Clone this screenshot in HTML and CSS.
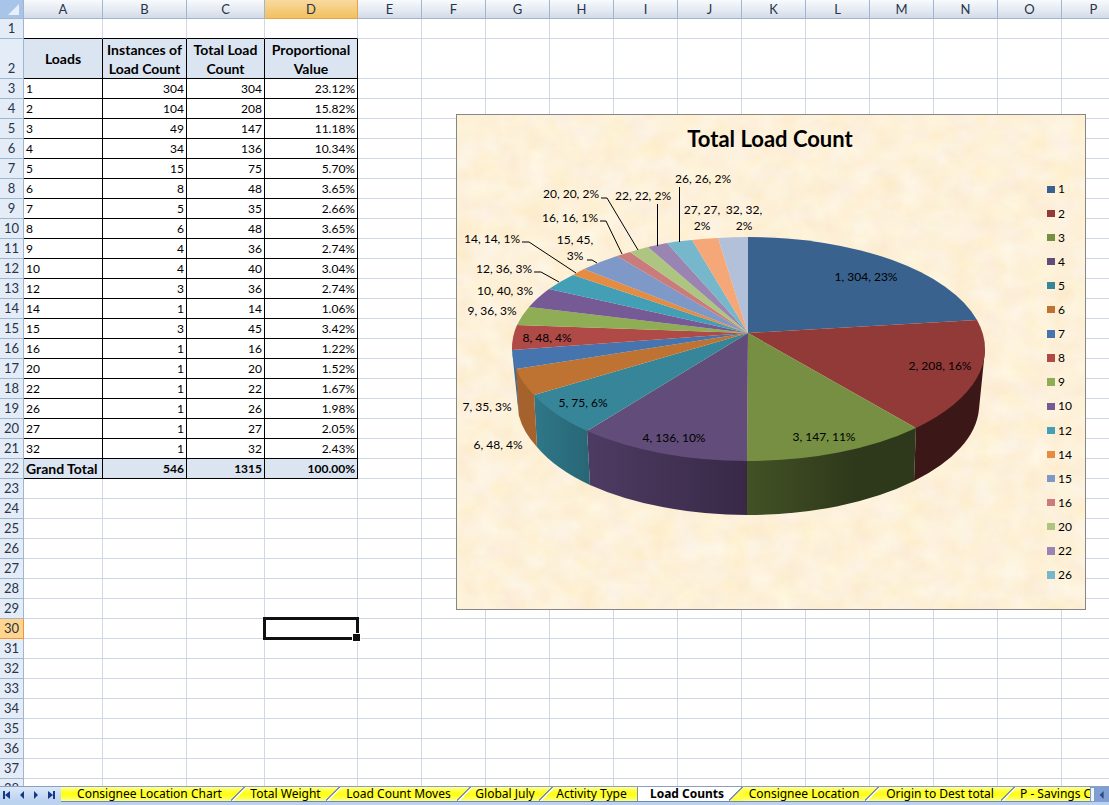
FILE: index.html
```html
<!DOCTYPE html>
<html lang="en">
<head>
<meta charset="utf-8">
<title>Load Counts</title>
<link rel="stylesheet" href="styles.css">
</head>
<body>
<main class="sheet">
<table class="grid">
<colgroup><col class="c-num"><col class="c-a"><col class="c-b"><col class="c-c"><col class="c-d"><col class="c-std"><col class="c-std"><col class="c-std"><col class="c-std"><col class="c-std"><col class="c-std"><col class="c-std"><col class="c-std"><col class="c-std"><col class="c-std"><col class="c-std"><col class="c-std"></colgroup>
<thead>
<tr><th class="corner"><svg viewBox="0 0 23 18" width="23" height="18" aria-hidden="true"><path d="M19 4V15H8Z" fill="#e6effa"/></svg></th><th>A</th><th>B</th><th>C</th><th class="selected">D</th><th>E</th><th>F</th><th>G</th><th>H</th><th>I</th><th>J</th><th>K</th><th>L</th><th>M</th><th>N</th><th>O</th><th>P</th></tr>
</thead>
<tbody>
<tr class="above"><th>1</th><td></td><td></td><td></td><td></td><td class="rest" colspan="12"></td></tr>
<tr class="data heading"><th>2</th><td>Loads</td><td>Instances of<br>Load Count</td><td>Total Load<br>Count</td><td>Proportional<br>Value</td><td class="rest" colspan="12"></td></tr>
<tr class="data"><th>3</th><td>1</td><td>304</td><td>304</td><td>23.12%</td><td class="rest" colspan="12"></td></tr>
<tr class="data"><th>4</th><td>2</td><td>104</td><td>208</td><td>15.82%</td><td class="rest" colspan="12"></td></tr>
<tr class="data"><th>5</th><td>3</td><td>49</td><td>147</td><td>11.18%</td><td class="rest" colspan="12"></td></tr>
<tr class="data"><th>6</th><td>4</td><td>34</td><td>136</td><td>10.34%</td><td class="rest" colspan="12"></td></tr>
<tr class="data"><th>7</th><td>5</td><td>15</td><td>75</td><td>5.70%</td><td class="rest" colspan="12"></td></tr>
<tr class="data"><th>8</th><td>6</td><td>8</td><td>48</td><td>3.65%</td><td class="rest" colspan="12"></td></tr>
<tr class="data"><th>9</th><td>7</td><td>5</td><td>35</td><td>2.66%</td><td class="rest" colspan="12"></td></tr>
<tr class="data"><th>10</th><td>8</td><td>6</td><td>48</td><td>3.65%</td><td class="rest" colspan="12"></td></tr>
<tr class="data"><th>11</th><td>9</td><td>4</td><td>36</td><td>2.74%</td><td class="rest" colspan="12"></td></tr>
<tr class="data"><th>12</th><td>10</td><td>4</td><td>40</td><td>3.04%</td><td class="rest" colspan="12"></td></tr>
<tr class="data"><th>13</th><td>12</td><td>3</td><td>36</td><td>2.74%</td><td class="rest" colspan="12"></td></tr>
<tr class="data"><th>14</th><td>14</td><td>1</td><td>14</td><td>1.06%</td><td class="rest" colspan="12"></td></tr>
<tr class="data"><th>15</th><td>15</td><td>3</td><td>45</td><td>3.42%</td><td class="rest" colspan="12"></td></tr>
<tr class="data"><th>16</th><td>16</td><td>1</td><td>16</td><td>1.22%</td><td class="rest" colspan="12"></td></tr>
<tr class="data"><th>17</th><td>20</td><td>1</td><td>20</td><td>1.52%</td><td class="rest" colspan="12"></td></tr>
<tr class="data"><th>18</th><td>22</td><td>1</td><td>22</td><td>1.67%</td><td class="rest" colspan="12"></td></tr>
<tr class="data"><th>19</th><td>26</td><td>1</td><td>26</td><td>1.98%</td><td class="rest" colspan="12"></td></tr>
<tr class="data"><th>20</th><td>27</td><td>1</td><td>27</td><td>2.05%</td><td class="rest" colspan="12"></td></tr>
<tr class="data"><th>21</th><td>32</td><td>1</td><td>32</td><td>2.43%</td><td class="rest" colspan="12"></td></tr>
<tr class="data total"><th>22</th><td>Grand Total</td><td>546</td><td>1315</td><td>100.00%</td><td class="rest" colspan="12"></td></tr>
<tr><th>23</th><td></td><td></td><td></td><td></td><td class="rest" colspan="12"></td></tr>
<tr><th>24</th><td></td><td></td><td></td><td></td><td class="rest" colspan="12"></td></tr>
<tr><th>25</th><td></td><td></td><td></td><td></td><td class="rest" colspan="12"></td></tr>
<tr><th>26</th><td></td><td></td><td></td><td></td><td class="rest" colspan="12"></td></tr>
<tr><th>27</th><td></td><td></td><td></td><td></td><td class="rest" colspan="12"></td></tr>
<tr><th>28</th><td></td><td></td><td></td><td></td><td class="rest" colspan="12"></td></tr>
<tr><th>29</th><td></td><td></td><td></td><td></td><td class="rest" colspan="12"></td></tr>
<tr><th class="selected">30</th><td></td><td></td><td></td><td class="cursor"></td><td class="rest" colspan="12"></td></tr>
<tr><th>31</th><td></td><td></td><td></td><td></td><td class="rest" colspan="12"></td></tr>
<tr><th>32</th><td></td><td></td><td></td><td></td><td class="rest" colspan="12"></td></tr>
<tr><th>33</th><td></td><td></td><td></td><td></td><td class="rest" colspan="12"></td></tr>
<tr><th>34</th><td></td><td></td><td></td><td></td><td class="rest" colspan="12"></td></tr>
<tr><th>35</th><td></td><td></td><td></td><td></td><td class="rest" colspan="12"></td></tr>
<tr><th>36</th><td></td><td></td><td></td><td></td><td class="rest" colspan="12"></td></tr>
<tr><th>37</th><td></td><td></td><td></td><td></td><td class="rest" colspan="12"></td></tr>
<tr><th>38</th><td></td><td></td><td></td><td></td><td class="rest" colspan="12"></td></tr>
</tbody>
</table>
<figure class="chart">
<svg class="plot" viewBox="456 114 630 496" role="img" aria-label="Total Load Count pie chart">
<defs>
<filter id="parchment" x="0" y="0" width="100%" height="100%" color-interpolation-filters="sRGB">
<feTurbulence type="fractalNoise" baseFrequency="0.04 0.05" numOctaves="4" seed="7"/>
<feColorMatrix values="0.02 0 0 0 0.982  0.03 0.05 0 0 0.904  0 0.12 0.08 0 0.752  0 0 0 0 1"/>
</filter>
<linearGradient id="side3"><stop offset="0" stop-color="#435225"/><stop offset=".65" stop-color="#2e381b"/><stop offset="1" stop-color="#2e381b"/></linearGradient>
<linearGradient id="side4"><stop offset="0" stop-color="#4e3b63"/><stop offset=".4" stop-color="#453457"/><stop offset="1" stop-color="#392947"/></linearGradient>
<linearGradient id="side5"><stop offset="0" stop-color="#2f7789"/><stop offset="1" stop-color="#286675"/></linearGradient>
</defs>
<rect x="456" y="114" width="630" height="496" filter="url(#parchment)"/>
<rect x="456.500" y="114.500" width="629" height="495" fill="none" stroke="#868686"/>
<g class="sides">
<path d="M985 350L979 409A231 110 0 0 1 914 481L916 427Z" fill="#3c1717"/>
<path d="M916 427L914 481A231 110 0 0 1 747 515V460Z" fill="url(#side3)"/>
<path d="M747 460V515A231 110 0 0 1 590 485L587 430Z" fill="url(#side4)"/>
<path d="M587 430L590 485A231 110 0 0 1 537 447L534 394Z" fill="url(#side5)"/>
<path d="M534 394L537 447A231 110 0 0 1 519 416L515 366Z" fill="#a5622c"/>
<path d="M512 350L519 417L516 369Z" fill="#3d68a0"/>
</g>
<g class="slices">
<path d="M748 333V237A236.500 112 0 0 1 977 320Z" fill="#39628f"/>
<path d="M748 333L977 320A236.500 112 0 0 1 916 428Z" fill="#923a38"/>
<path d="M748 333L916 428A236.500 112 0 0 1 747 461Z" fill="#768f42"/>
<path d="M748 333L747 461A236.500 112 0 0 1 587 431Z" fill="#624c7a"/>
<path d="M748 333L587 431A236.500 112 0 0 1 534 395Z" fill="#378598"/>
<path d="M748 333L534 395A236.500 112 0 0 1 516 369Z" fill="#bf7333"/>
<path d="M748 333L516 369A236.500 112 0 0 1 512 350Z" fill="#4674ae"/>
<path d="M748 333L512 350A236.500 112 0 0 1 517 325Z" fill="#b04a47"/>
<path d="M748 333L517 325A236.500 112 0 0 1 529 307Z" fill="#8fad54"/>
<path d="M748 333L529 307A236.500 112 0 0 1 549 289Z" fill="#755a95"/>
<path d="M748 333L549 289A236.500 112 0 0 1 573 275Z" fill="#439fb5"/>
<path d="M748 333L573 275A236.500 112 0 0 1 584 269Z" fill="#e48c41"/>
<path d="M748 333L584 269A236.500 112 0 0 1 617 256Z" fill="#7e99c7"/>
<path d="M748 333L617 256A236.500 112 0 0 1 630 252Z" fill="#c97c7b"/>
<path d="M748 333L630 252A236.500 112 0 0 1 648 247Z" fill="#adc580"/>
<path d="M748 333L648 247A236.500 112 0 0 1 667 243Z" fill="#9a84b1"/>
<path d="M748 333L667 243A236.500 112 0 0 1 692 240Z" fill="#77b7cb"/>
<path d="M748 333L692 240A236.500 112 0 0 1 718 238Z" fill="#f6a778"/>
<path d="M748 333L718 238A236.500 112 0 0 1 748 237Z" fill="#b3c0da"/>
</g>
<g class="leaders">
<path d="M601 198H607L638 250"/><path d="M600 221H606L622 254"/><path d="M522 242H529L576 273"/><path d="M587 260H592L597 263"/><path d="M534 272H541L559 282"/><path d="M657.500 204V246"/><path d="M679.500 187V242"/>
</g>
<text class="chart-title" x="770" y="147">Total Load Count</text>
<g class="labels">
<text x="703" y="183">26, 26, 2%</text><text x="643" y="200">22, 22, 2%</text><text x="571" y="198">20, 20, 2%</text><text x="570" y="222">16, 16, 1%</text><text x="492" y="243">14, 14, 1%</text>
<text x="575" y="244">15, 45,</text><text x="575" y="260">3%</text><text x="504" y="273">12, 36, 3%</text><text x="505" y="295">10, 40, 3%</text><text x="492" y="315">9, 36, 3%</text>
<text x="702" y="214">27, 27,</text><text x="702" y="230">2%</text><text x="744" y="214">32, 32,</text><text x="744" y="230">2%</text>
<text x="547" y="342">8, 48, 4%</text><text x="487" y="411">7, 35, 3%</text><text x="498" y="449">6, 48, 4%</text><text x="583" y="407">5, 75, 6%</text><text x="674" y="442">4, 136, 10%</text><text x="824" y="441">3, 147, 11%</text><text x="940" y="370">2, 208, 16%</text><text x="866" y="281">1, 304, 23%</text>
</g>
<g class="legend">
<rect x="1047" y="186" width="8" height="7" fill="#39628f"/><text x="1058" y="193">1</text>
<rect x="1047" y="210" width="8" height="7" fill="#923a38"/><text x="1058" y="218">2</text>
<rect x="1047" y="234" width="8" height="7" fill="#768f42"/><text x="1058" y="242">3</text>
<rect x="1047" y="258" width="8" height="7" fill="#624c7a"/><text x="1058" y="266">4</text>
<rect x="1047" y="282" width="8" height="7" fill="#378598"/><text x="1058" y="290">5</text>
<rect x="1047" y="306" width="8" height="7" fill="#bf7333"/><text x="1058" y="314">6</text>
<rect x="1047" y="330" width="8" height="8" fill="#4674ae"/><text x="1058" y="338">7</text>
<rect x="1047" y="354" width="8" height="8" fill="#b04a47"/><text x="1058" y="362">8</text>
<rect x="1047" y="378" width="8" height="8" fill="#8fad54"/><text x="1058" y="386">9</text>
<rect x="1047" y="403" width="8" height="7" fill="#755a95"/><text x="1058" y="410">10</text>
<rect x="1047" y="427" width="8" height="7" fill="#439fb5"/><text x="1058" y="435">12</text>
<rect x="1047" y="451" width="8" height="7" fill="#e48c41"/><text x="1058" y="459">14</text>
<rect x="1047" y="475" width="8" height="7" fill="#7e99c7"/><text x="1058" y="483">15</text>
<rect x="1047" y="499" width="8" height="7" fill="#c97c7b"/><text x="1058" y="507">16</text>
<rect x="1047" y="523" width="8" height="7" fill="#adc580"/><text x="1058" y="531">20</text>
<rect x="1047" y="547" width="8" height="8" fill="#9a84b1"/><text x="1058" y="555">22</text>
<rect x="1047" y="571" width="8" height="8" fill="#77b7cb"/><text x="1058" y="579">26</text>
</g>
</svg>
</figure>
</main>
<footer class="tabbar">
<div class="nav">
<button aria-label="First sheet"><svg viewBox="0 0 10 8"><path d="M1 0H3V8H1ZM8 0V8L3 4Z"/></svg></button>
<button aria-label="Previous sheet"><svg viewBox="0 0 10 8"><path d="M7 0V8L3 4Z"/></svg></button>
<button aria-label="Next sheet"><svg viewBox="0 0 10 8"><path d="M3 0V8L7 4Z"/></svg></button>
<button aria-label="Last sheet"><svg viewBox="0 0 10 8"><path d="M2 0V8L7 4ZM7 0H9V8H7Z"/></svg></button>
</div>
<div class="tabs">
<button class="tab">Consignee Location Chart</button>
<button class="tab slant">Total Weight</button>
<button class="tab slant">Load Count Moves</button>
<button class="tab slant">Global July</button>
<button class="tab slant">Activity Type</button>
<button class="tab active">Load Counts</button>
<button class="tab slant after-active">Consignee Location</button>
<button class="tab slant">Origin to Dest total</button>
<button class="tab slant last">P - Savings C</button>
</div>
<div class="splitter"></div>
<button class="scroll" aria-label="Scroll left"><svg viewBox="0 0 10 10"><path d="M7 0V10L2 5Z"/></svg></button>
</footer>
</body>
</html>
```
FILE: styles.css
```css
* {
  box-sizing: border-box;
}

body {
  margin: 0;
  height: 100vh;
  display: flex;
  flex-direction: column;
  overflow: hidden;
  background: #fff;
  font-family: Lato, "Open Sans", sans-serif;
  font-size: 12px;
  color: #000;
}

.sheet {
  position: relative;
  flex: 1;
  min-height: 0;
  overflow: hidden;
}

/* Cell grid */
.grid {
  width: 1126px;
  table-layout: fixed;
  border-collapse: separate;
  border-spacing: 0;
  line-height: 19px;
}

.c-num { width: 24px; }
.c-a { width: 79px; }
.c-b { width: 84px; }
.c-c { width: 78px; }
.c-d { width: 93px; }
.c-std { width: 64px; }

.grid th,
.grid td {
  height: 20px;
  padding: 0;
  border-right: 1px solid #d0d7e5;
  border-bottom: 1px solid #d0d7e5;
}

.grid th {
  border-color: #9eb6ce;
  background: #e4ecf7;
  color: #27344a;
  font-size: 13px;
  font-weight: 400;
}

.grid thead th {
  height: 19px;
  line-height: 18px;
  background: linear-gradient(#f8fafc, #e5eaf2 55%, #d3dbe8);
}

.grid thead .corner {
  background: #a9c4e9;
}

.corner svg {
  display: block;
}

.grid thead .selected {
  background: linear-gradient(#f9d99f, #f1c15f);
  border-color: #e8a24a;
}

.grid tbody .selected {
  background: #ffd58d;
  border-color: #f29536;
}

.grid .rest {
  background: repeating-linear-gradient(90deg, transparent 0 63px, #d0d7e5 63px 64px);
}

.above td:not(.rest) {
  border-bottom-color: #000;
}

.data td:not(.rest) {
  padding: 0 2px;
  border-color: #000;
  text-align: right;
}

.grid .data td:nth-child(2) {
  text-align: left;
}

.grid .heading td {
  height: 40px;
}

.grid .heading th {
  vertical-align: bottom;
}

.grid .heading td:not(.rest) {
  padding: 0;
  background: #dbe5f1;
  font-size: 14px;
  font-weight: 700;
  line-height: 19px;
  text-align: center;
}

.total td:not(.rest) {
  background: #dbe5f1;
  font-weight: 700;
}

.total td:nth-child(2) {
  font-size: 14px;
}

.cursor {
  position: relative;
}

.cursor::before {
  content: "";
  position: absolute;
  inset: -2px;
  border: 3px solid #111;
}

.cursor::after {
  content: "";
  position: absolute;
  right: -4px;
  bottom: -4px;
  width: 7px;
  height: 7px;
  border: 1px solid #fff;
  background: #111;
}

/* Floating chart */
.chart {
  position: absolute;
  left: 456px;
  top: 114px;
  width: 630px;
  margin: 0;
}

.plot {
  display: block;
  width: 100%;
}

.chart-title {
  font-size: 22px;
  font-weight: 700;
  text-anchor: middle;
}

.labels {
  font-size: 12px;
  text-anchor: middle;
}

.legend {
  font-size: 12px;
}

.leaders {
  fill: none;
  stroke: #000;
}

/* Sheet tabs */
.tabbar {
  display: flex;
  height: 19px;
  border-top: 1px solid #8a9fc4;
  border-bottom: 3px solid #bcd3f0;
  background: #c9dcf5;
}

.tabbar button {
  border: 0;
  padding: 0;
  background: none;
  color: #000;
}

.nav {
  display: flex;
  align-items: center;
  width: 61px;
  padding-right: 3px;
  background: linear-gradient(#dbe8f9, #b9d0f0);
}

.nav button {
  flex: 1;
  display: flex;
  justify-content: center;
}

.nav svg {
  width: 10px;
  height: 8px;
  fill: #123a86;
}

.tabs {
  flex: 1;
  min-width: 0;
  display: grid;
  grid-template-columns: 177px 95px 131px 82px 91px 99px 136px 136px 1fr;
  overflow-x: clip;
  border-bottom: 1px solid #6f87b5;
}

.tabbar .tab {
  background: linear-gradient(#ffff9a, #ffff1c 40%, #ffff1c 60%, #ffff8a);
  font-family: "Noto Sans", sans-serif;
  font-size: 12px;
  line-height: 14px;
  white-space: nowrap;
}

.tabbar .slant {
  position: relative;
}

.slant::before {
  content: "";
  position: absolute;
  left: -7px;
  top: 0;
  width: 14px;
  height: 14px;
  background: linear-gradient(135deg, transparent 45%, #7f8fb0 45% 51%, #fffff0 51% 60%, transparent 60%);
}

.after-active::before {
  background: linear-gradient(135deg, #fff 45%, #7f8fb0 45% 51%, #ffff4a 51%);
}

.tabbar .active {
  border-left: 1px solid #7f8fb0;
  background: #fff;
  font-weight: 700;
}

.tabbar .last {
  padding-left: 12px;
  text-align: left;
}

.splitter {
  width: 5px;
  border: 1px solid #7f9cc8;
  background: #eef5fd;
}

.tabbar .scroll {
  width: 14px;
  display: grid;
  place-items: center;
  background: #7f9fd2;
}

.scroll svg {
  width: 8px;
  height: 10px;
  fill: #2c4a86;
}
```
